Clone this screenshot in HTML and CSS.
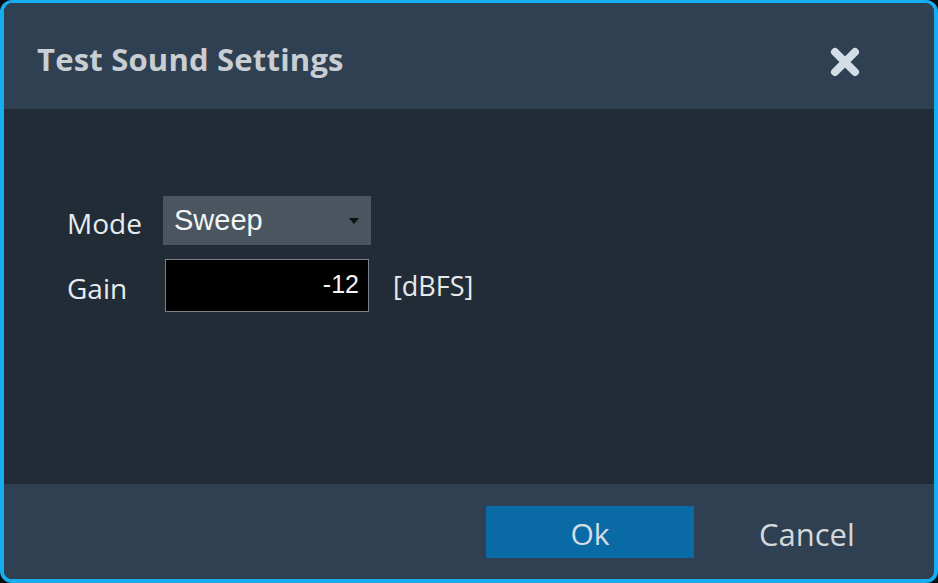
FILE: index.html
```html
<!DOCTYPE html>
<html lang="en">
<head>
    <meta charset="UTF-8">
    <meta name="viewport" content="width=device-width, initial-scale=1.0">
    <title>Test Sound Settings</title>
    <link rel="stylesheet" href="styles.css">
</head>
<body>
    <div class="dialog">
        <div class="dialog-header">
            <h2 class="dialog-title">Test Sound Settings</h2>
            <button class="close-btn" aria-label="Close">
                <svg width="34" height="32" viewBox="0 0 34 32">
                    <path d="M7 6 L27 26 M27 6 L7 26" stroke="#d3dde5" stroke-width="8" stroke-linecap="round"/>
                </svg>
            </button>
        </div>

        <div class="dialog-body">
            <div class="field-row">
                <label class="field-label" for="mode">Mode</label>
                <div class="select-box" id="mode">
                    <span>Sweep</span>
                    <span class="select-arrow"></span>
                </div>
            </div>
            <div class="field-row">
                <label class="field-label" for="gain">Gain</label>
                <div class="number-box" id="gain">-12</div>
                <span class="unit">[dBFS]</span>
            </div>
        </div>

        <div class="dialog-footer">
            <button class="btn btn-primary">Ok</button>
            <button class="btn btn-plain">Cancel</button>
        </div>
    </div>
</body>
</html>
```

FILE: styles.css
```css
html, body {
    margin: 0;
    height: 100%;
    background: #0a0d10;
}

body {
    font-family: "Open Sans", "Noto Sans", sans-serif;
    color: #e6ebef;
}

.dialog {
    box-sizing: border-box;
    width: 938px;
    height: 583px;
    border: 4px solid #17aef0;
    border-top-width: 3px;
    border-radius: 12px;
    background: #222c37;
    display: flex;
    flex-direction: column;
    overflow: hidden;
}

.dialog-header {
    height: 106px;
    background: #2f4052;
    display: flex;
    align-items: center;
    justify-content: space-between;
    padding: 0 72px 0 33px;
    flex-shrink: 0;
}

.dialog-title {
    margin: 5px 0 0;
    font-size: 31px;
    font-weight: 700;
    color: #c9ced3;
    letter-spacing: 0.2px;
}

.close-btn {
    background: none;
    border: none;
    padding: 0;
    margin-top: 12px;
    width: 34px;
    height: 32px;
    cursor: pointer;
}

.dialog-body {
    flex: 1;
    padding: 87px 0 0 63px;
    display: flex;
    flex-direction: column;
    gap: 14px;
}

.field-row {
    display: flex;
    align-items: center;
}

.field-label {
    width: 96px;
    font-size: 28px;
    color: #e8ecef;
    padding-top: 4px;
}

.select-box {
    box-sizing: border-box;
    width: 208px;
    height: 49px;
    background: #4a5560;
    display: flex;
    align-items: center;
    justify-content: space-between;
    padding: 0 12px 1px 11px;
    font-family: "Liberation Sans", Arial, sans-serif;
    font-size: 29px;
    color: #f2f4f6;
}

.select-arrow {
    width: 0;
    height: 0;
    border-left: 5px solid transparent;
    border-right: 5px solid transparent;
    border-top: 6px solid #0e1114;
    margin-top: 2px;
}

.number-box {
    box-sizing: border-box;
    width: 204px;
    height: 53px;
    margin-left: 2px;
    background: #000;
    border: 1px solid #7b8186;
    display: flex;
    align-items: center;
    justify-content: flex-end;
    padding: 0 9px 2px 0;
    font-family: "Liberation Sans", Arial, sans-serif;
    font-size: 25px;
    color: #f5f5f5;
}

.unit {
    margin-left: 24px;
    font-size: 27px;
    color: #e6eaed;
}

.dialog-footer {
    height: 95px;
    background: #2f4052;
    display: flex;
    align-items: center;
    padding-left: 482px;
    flex-shrink: 0;
}

.btn {
    font-family: "Open Sans", "Noto Sans", sans-serif;
    font-size: 30px;
    border: none;
    cursor: pointer;
}

.btn-primary {
    width: 208px;
    height: 52px;
    background: #0a6aa6;
    color: #d5dde4;
    padding: 4px 0 0;
}

.btn-plain {
    background: none;
    color: #d3d8dc;
    font-size: 31px;
    margin-left: 65px;
    padding: 4px 0 0;
}
```
